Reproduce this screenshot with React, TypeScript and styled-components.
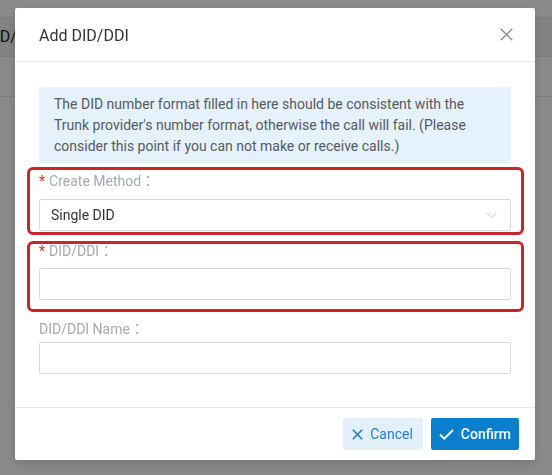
import React from 'react';
import styled, { createGlobalStyle } from 'styled-components';

const GlobalStyle = createGlobalStyle`
  html, body {
    margin: 0;
    padding: 0;
  }
  body {
    font-family: Roboto, "Noto Sans CJK JP", "Liberation Sans", sans-serif;
    overflow: hidden;
  }
  * {
    box-sizing: border-box;
  }
`;

const Page = styled.div`
  height: 475px;
  background: #ffffff;
`;

const PageTop = styled.div`
  height: 18px;
  border-bottom: 1px solid #ebebeb;
`;

const TableHead = styled.div`
  height: 39px;
  line-height: 38px;
  background: #f3f3f3;
  border-bottom: 1px solid #e6e6e6;
  font-size: 16px;
  color: #222;
  white-space: nowrap;
  overflow: hidden;
`;

const HeadCell = styled.span`
  display: inline-block;
  margin-left: -15px;
`;

const TableRow = styled.div`
  height: 40px;
  border-bottom: 1px solid #e6e6e6;
`;

const Mask = styled.div`
  position: fixed;
  inset: 0;
  background: rgba(0, 0, 0, 0.46);
  display: flex;
  justify-content: flex-start;
  align-items: flex-start;
  padding: 8px 0 0 15px;
`;

const Modal = styled.div`
  width: 520px;
  background: #fff;
  border-radius: 2px;
  box-shadow: 0 4px 12px rgba(0, 0, 0, 0.15);
  display: flex;
  flex-direction: column;
`;

const ModalHeader = styled.div`
  height: 54px;
  padding: 0 22px 0 24px;
  border-bottom: 1px solid #e8e8e8;
  display: flex;
  align-items: center;
  justify-content: space-between;
`;

const Title = styled.div`
  font-size: 16px;
  color: #333;
  padding-top: 1px;
`;

const CloseButton = styled.button`
  border: 0;
  background: none;
  padding: 0;
  width: 13px;
  height: 13px;
  display: flex;
  cursor: pointer;
`;

const ModalBody = styled.div`
  padding: 25px 24px 33px;
  display: flex;
  flex-direction: column;
`;

const Notice = styled.div`
  background: #e6f2fb;
  padding: 7px 15px 6px;
  font-size: 14px;
  line-height: 21px;
  color: #555a60;
`;

const FormItem = styled.div<{ $space: number }>`
  position: relative;
  margin-top: ${(p) => p.$space}px;
  display: flex;
  flex-direction: column;
`;

const Label = styled.label<{ $gap: number }>`
  font-size: 14px;
  line-height: 20px;
  color: #a4a8b1;
  margin-bottom: ${(p) => p.$gap}px;
`;

const Required = styled.span`
  color: #e5262a;
  margin-right: 4px;
`;

const Input = styled.input`
  height: 32px;
  width: 100%;
  border: 1px solid #d9d9d9;
  border-radius: 2px;
  padding: 0 11px;
  font-family: inherit;
  font-size: 14px;
  color: #333;
  outline: none;
`;

const Select = styled.div`
  height: 32px;
  border: 1px solid #d9d9d9;
  border-radius: 2px;
  padding: 0 13px 0 11px;
  font-size: 14px;
  color: #333;
  display: flex;
  align-items: center;
  justify-content: space-between;
`;

const Mark = styled.div<{ $top: number; $bottom: number }>`
  position: absolute;
  left: -12px;
  right: -13px;
  top: ${(p) => p.$top}px;
  bottom: ${(p) => p.$bottom}px;
  border: 3px solid #c8262c;
  border-radius: 6px;
  pointer-events: none;
`;

const ModalFooter = styled.div`
  border-top: 1px solid #e8e8e8;
  padding: 10px 16px 10px;
  display: flex;
  justify-content: flex-end;
  gap: 8px;
`;

const Button = styled.button<{ $primary?: boolean }>`
  height: 32px;
  padding: 0 ${(p) => (p.$primary ? 8 : 10)}px 0 ${(p) => (p.$primary ? 8 : 9)}px;
  border: 0;
  border-radius: 2px;
  font-family: inherit;
  font-size: 14px;
  font-weight: ${(p) => (p.$primary ? 500 : 400)};
  background: ${(p) => (p.$primary ? '#0b7fcd' : '#e3f0fa')};
  color: ${(p) => (p.$primary ? '#ffffff' : '#1f7fcf')};
  display: flex;
  align-items: center;
  gap: 7px;
  cursor: pointer;
`;

const CloseIcon = () => (
  <svg width="13" height="13" viewBox="0 0 13 13">
    <path d="M0.7 0.7 L12.3 12.3 M12.3 0.7 L0.7 12.3" stroke="#8c8c8c" strokeWidth="1.3" fill="none" />
  </svg>
);

const CrossIcon = () => (
  <svg width="11" height="11" viewBox="0 0 11 11">
    <path d="M0.8 0.8 L10.2 10.2 M10.2 0.8 L0.8 10.2" stroke="#1f7fcf" strokeWidth="1.6" fill="none" />
  </svg>
);

const CheckIcon = () => (
  <svg width="15" height="11" viewBox="0 0 15 11">
    <polyline points="1,5.5 5.3,9.6 14,1" stroke="#fff" strokeWidth="1.9" fill="none" />
  </svg>
);

const ChevronIcon = () => (
  <svg width="11" height="7" viewBox="0 0 11 7">
    <polyline points="0.5,0.8 5.5,5.8 10.5,0.8" stroke="#c4c4c4" strokeWidth="1" fill="none" />
  </svg>
);

export default function App() {
  return (
    <>
      <GlobalStyle />
      <Page>
        <PageTop />
        <TableHead>
          <HeadCell>DID/DDI</HeadCell>
        </TableHead>
        <TableRow />
      </Page>
      <Mask>
        <Modal>
          <ModalHeader>
            <Title>Add DID/DDI</Title>
            <CloseButton aria-label="Close">
              <CloseIcon />
            </CloseButton>
          </ModalHeader>
          <ModalBody>
            <Notice>
              The DID number format filled in here should be consistent with the Trunk provider's
              number format, otherwise the call will fail. (Please consider this point if you can
              not make or receive calls.)
            </Notice>
            <FormItem $space={8}>
              <Label $gap={8}>
                <Required>*</Required>Create Method：
              </Label>
              <Select>
                <span>Single DID</span>
                <ChevronIcon />
              </Select>
              <Mark $top={-4} $bottom={-4} />
            </FormItem>
            <FormItem $space={10}>
              <Label $gap={7}>
                <Required>*</Required>DID/DDI：
              </Label>
              <Input />
              <Mark $top={0} $bottom={-12} />
            </FormItem>
            <FormItem $space={19}>
              <Label $gap={3}>DID/DDI Name：</Label>
              <Input />
            </FormItem>
          </ModalBody>
          <ModalFooter>
            <Button>
              <CrossIcon />
              Cancel
            </Button>
            <Button $primary>
              <CheckIcon />
              Confirm
            </Button>
          </ModalFooter>
        </Modal>
      </Mask>
    </>
  );
}
